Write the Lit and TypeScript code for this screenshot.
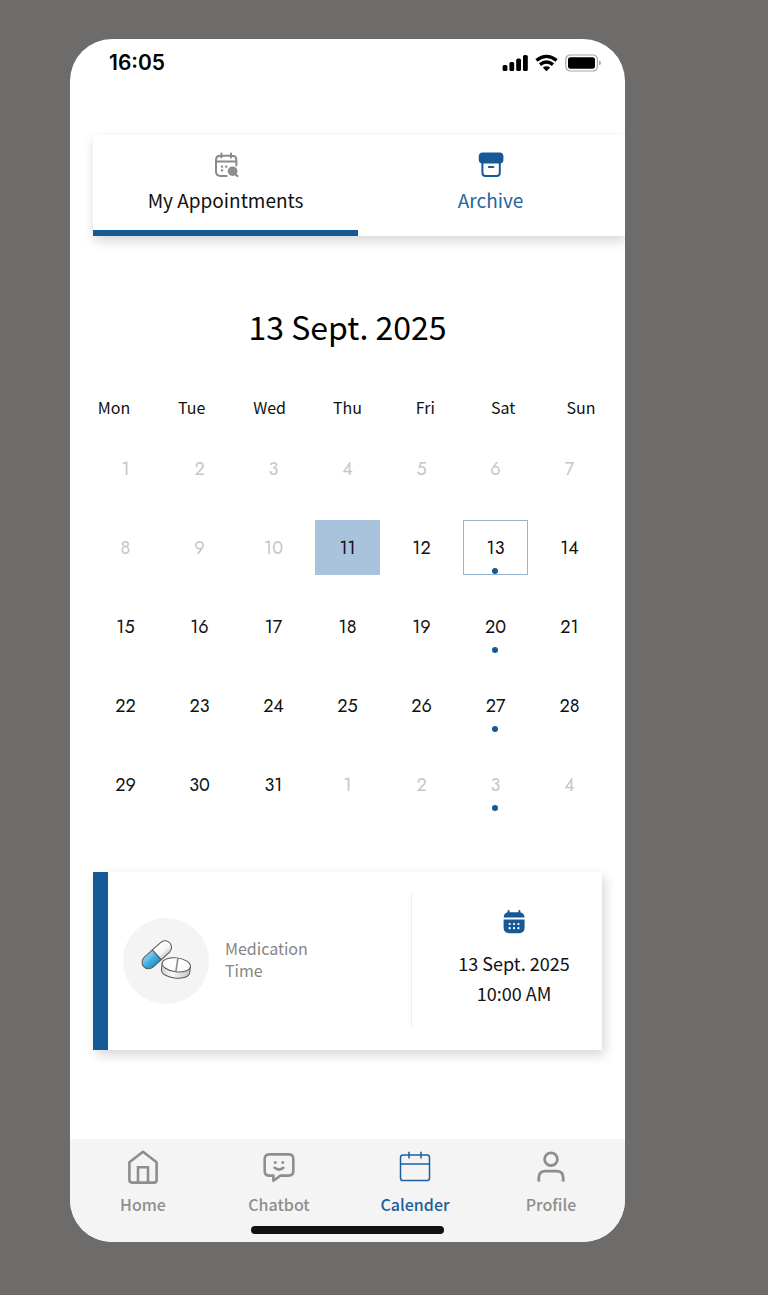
import { LitElement, html, css, svg, nothing } from "lit";
import { customElement, state } from "lit/decorators.js";
import { classMap } from "lit/directives/class-map.js";

interface Day {
  label: number;
  muted?: boolean;
  today?: boolean;
  event?: boolean;
}

const WEEKDAYS = ["Mon", "Tue", "Wed", "Thu", "Fri", "Sat", "Sun"];

const EVENT_INDEXES = [12, 19, 26, 33];

const DAYS: Day[] = Array.from({ length: 35 }, (_, i) => ({
  label: i < 31 ? i + 1 : i - 30,
  muted: i < 10 || i > 30,
  today: i === 10,
  event: EVENT_INDEXES.includes(i),
}));

const iconHome = svg`<svg viewBox="0 0 32 36" width="32" height="36" fill="none" stroke="currentColor" stroke-width="2.6" stroke-linejoin="round" stroke-linecap="round">
  <path d="M2.4 13.2 L16 2.8 L29.6 13.2 V31 Q29.6 33.6 27 33.6 H5 Q2.4 33.6 2.4 31 Z"/>
  <path d="M11 33 V18.2 H21 V33" stroke-linejoin="miter"/>
</svg>`;

const iconChat = svg`<svg viewBox="0 0 32 36" width="32" height="36" fill="none" stroke="currentColor" stroke-width="2.6" stroke-linejoin="round" stroke-linecap="round">
  <path d="M6.4 5.4 H25.6 Q30.3 5.4 30.3 10 V22 Q30.3 26.6 25.6 26.6 H17.4 L10.4 31.8 V26.6 H6.4 Q1.7 26.6 1.7 22 V10 Q1.7 5.4 6.4 5.4 Z"/>
  <path d="M11.6 18.8 Q16 22.4 20.4 18.8"/>
  <path d="M12.2 13.4 V13.6 M19.8 13.4 V13.6" stroke-width="3"/>
</svg>`;

const iconCalendar = svg`<svg viewBox="0 0 32 36" width="32" height="36" fill="none" stroke="currentColor" stroke-width="1.5">
  <rect x="1.5" y="6" width="29" height="25.6" rx="2.6"/>
  <path d="M1.5 15 H30.5 M10 2.8 V9.6 M22 2.8 V9.6"/>
</svg>`;

const iconProfile = svg`<svg viewBox="0 0 32 36" width="32" height="36" fill="none" stroke="currentColor" stroke-width="2.8">
  <circle cx="16" cy="10.2" r="6.4"/>
  <path d="M3.8 32.4 V29 Q3.8 22.2 10.6 22.2 H21.4 Q28.2 22.2 28.2 29 V32.4"/>
</svg>`;

const NAV = [
  { label: "Home", icon: iconHome },
  { label: "Chatbot", icon: iconChat },
  { label: "Calender", icon: iconCalendar, active: true },
  { label: "Profile", icon: iconProfile },
];

@customElement("app-root")
export class AppRoot extends LitElement {
  static styles = css`
    :host {
      display: block;
      box-sizing: border-box;
      min-height: 100vh;
      padding: 39px 143px 53px 70px;
      background: #6d6c6a;
      color: #111;
      font-family: "Noto Sans CJK SC", "Noto Sans", sans-serif;
    }
    *,
    *::before,
    *::after {
      box-sizing: border-box;
    }
    button {
      margin: 0;
      padding: 0;
      border: 0;
      background: none;
      color: inherit;
      font: inherit;
      cursor: pointer;
    }
    svg {
      display: block;
    }
    .phone {
      display: flex;
      flex-direction: column;
      overflow: hidden;
      border-radius: 42px;
      background: #fff;
    }
    .status {
      display: flex;
      justify-content: space-between;
      align-items: center;
      height: 48px;
      padding: 0 24px 0 39px;
      color: #000;
    }
    .clock {
      font: 600 21px/24px Inter, sans-serif;
    }
    .status-icons {
      display: flex;
      align-items: center;
      gap: 7px;
    }
    .tabs {
      display: grid;
      grid-template-columns: 1fr 1fr;
      margin: 48px 0 0 23px;
      padding-right: 2px;
      background: #fff;
      box-shadow: 1px 5px 11px rgba(0, 0, 0, 0.16);
    }
    .tab {
      display: flex;
      flex-direction: column;
      align-items: center;
      gap: 8px;
      height: 101px;
      padding-top: 17px;
      border-bottom: 6px solid transparent;
      font-size: 19px;
      line-height: 28px;
    }
    .tab svg {
      color: #8a8a8a;
    }
    .tab.selected {
      border-color: #155a97;
    }
    .tab.link {
      color: #2566a1;
    }
    .title {
      margin: 66px 0 0;
      color: #000;
      font-size: 32px;
      font-weight: 400;
      line-height: 48px;
      text-align: center;
    }
    .weekdays {
      display: grid;
      grid-template-columns: repeat(7, 1fr);
      margin: 45px 5px 0;
      font-size: 16px;
      line-height: 24px;
      text-align: center;
    }
    .days {
      display: grid;
      grid-template-columns: repeat(7, 1fr);
      gap: 24px 9px;
      margin: 22px 23px 0;
      font-family: Jost, Lato, sans-serif;
      font-size: 18px;
      line-height: 24px;
    }
    .day {
      position: relative;
      height: 55px;
      border: 1px solid transparent;
    }
    .day.muted {
      color: #c6c6c6;
    }
    .day.today {
      background: #a9c3dc;
    }
    .day.chosen {
      border-color: #94b4d4;
    }
    .dot {
      position: absolute;
      bottom: 0;
      left: 50%;
      width: 6px;
      height: 6px;
      margin-left: -4px;
      border-radius: 50%;
      background: #155a97;
    }
    .card {
      display: grid;
      grid-template-columns: 1fr 191px;
      align-items: center;
      min-height: 178px;
      margin: 60px 23px 0;
      border-left: 15px solid #155a97;
      background: #fff;
      box-shadow: 3px 5px 11px rgba(0, 0, 0, 0.16);
    }
    .what {
      display: flex;
      align-items: center;
      gap: 16px;
      padding-left: 15px;
      color: #858585;
      font-size: 16px;
      line-height: 22px;
    }
    .badge {
      display: grid;
      place-items: center;
      flex: none;
      width: 86px;
      height: 86px;
      border-radius: 50%;
      background: #f4f4f4;
    }
    .kind {
      width: 100px;
      margin: 0;
      padding-bottom: 4px;
    }
    .when {
      display: flex;
      flex-direction: column;
      align-items: center;
      height: 134px;
      padding: 15px 0 0 14px;
      border-left: 1px solid #eee;
      font-size: 18px;
      line-height: 30px;
    }
    .when svg {
      margin-bottom: 13px;
      color: #155a97;
    }
    .bottom {
      margin-top: 89px;
      padding: 0 6px 8px 5px;
      background: #f4f4f4;
    }
    .nav {
      display: grid;
      grid-template-columns: repeat(4, 1fr);
      padding-top: 10px;
    }
    .item {
      display: flex;
      flex-direction: column;
      align-items: center;
      gap: 7px;
      color: #8e8e8e;
      font-size: 16px;
      font-weight: 500;
      line-height: 24px;
      text-decoration: none;
    }
    .item.active {
      color: #1c5f9f;
    }
    .handle {
      width: 193px;
      height: 8px;
      margin: 10px auto 0;
      border-radius: 4px;
      background: #111;
    }
  `;

  @state() private chosen = 12;

  private renderDay(day: Day, index: number) {
    const classes = {
      day: true,
      muted: !!day.muted,
      today: !!day.today,
      chosen: index === this.chosen,
    };
    return html`<button
      type="button"
      class=${classMap(classes)}
      @click=${() => (this.chosen = index)}
    >${day.label}${day.event ? html`<span class="dot"></span>` : nothing}</button>`;
  }

  render() {
    return html`
      <div class="phone">
        <header class="status">
          <span class="clock">16:05</span>
          <span class="status-icons">
            <svg width="26" height="18" viewBox="0 0 26 18" fill="currentColor" aria-hidden="true">
              <rect x="0.6" y="11" width="4.8" height="6" rx="1.6"/>
              <rect x="7.4" y="8" width="4.8" height="9" rx="1.6"/>
              <rect x="14.2" y="4.6" width="4.8" height="12.4" rx="1.6"/>
              <rect x="21" y="1" width="4.8" height="16" rx="1.6"/>
            </svg>
            <svg width="23" height="18" viewBox="0 0 23 18" fill="none" stroke="currentColor" stroke-width="3.3" aria-hidden="true">
              <path d="M1.4 6.4 Q11.5 -1.6 21.6 6.4"/>
              <path d="M5 10.6 Q11.5 5.4 18 10.6"/>
              <path d="M7.8 13.6 Q11.5 10.8 15.2 13.6 L11.5 17.2 Z" fill="currentColor" stroke="none"/>
            </svg>
            <svg width="36" height="18" viewBox="0 0 36 18" aria-hidden="true">
              <rect x="0.8" y="1" width="31.6" height="16" rx="4.4" fill="none" stroke="#a6a6a6" stroke-width="1.2"/>
              <rect x="3" y="3.2" width="27" height="11.6" rx="2.4"/>
              <path d="M34 6.4 Q36 7.2 36 9 Q36 10.8 34 11.6 Z" fill="#a6a6a6"/>
            </svg>
          </span>
        </header>

        <div class="tabs" role="tablist">
          <button type="button" class="tab selected" role="tab" aria-selected="true">
            <svg width="26" height="26" viewBox="0 0 26 26" fill="none" stroke="currentColor" stroke-width="2" stroke-linecap="round" aria-hidden="true">
              <path d="M13.6 24 H7.4 Q3 24 3 19.6 V8.2 Q3 3.8 7.4 3.8 H19 Q23.4 3.8 23.4 8.2 V13.6 M3 9.4 H23.4 M8.4 1.4 V5.4 M18 1.4 V5.4"/>
              <path d="M9 14.6 H9.1 M13.2 14.6 H13.3 M9 18.4 H9.1" stroke-width="2.4"/>
              <circle cx="19.6" cy="19.2" r="4.8" fill="currentColor" stroke="none"/>
              <path d="M22.4 22.2 L24.4 24" stroke-width="2.2"/>
              <circle cx="19.6" cy="19.2" r="2.4" stroke="#9c9c9c" stroke-width="0.7"/>
            </svg>
            <span>My Appointments</span>
          </button>
          <button type="button" class="tab link" role="tab" aria-selected="false">
            <svg width="26" height="26" viewBox="0 0 26 26" fill="none" stroke="#155a97" aria-hidden="true">
              <path d="M4.4 11 V20.8 Q4.4 24 7.6 24 H18.6 Q21.8 24 21.8 20.8 V11" stroke-width="2"/>
              <rect x="0.8" y="0.4" width="24.6" height="11.2" rx="3.8" fill="#155a97" stroke="none"/>
              <path d="M10.8 15 H15.4" stroke-width="2" stroke-linecap="round"/>
            </svg>
            <span>Archive</span>
          </button>
        </div>

        <h1 class="title">13 Sept. 2025</h1>

        <div class="weekdays">${WEEKDAYS.map((name) => html`<span>${name}</span>`)}</div>
        <div class="days">${DAYS.map((day, i) => this.renderDay(day, i))}</div>

        <section class="card">
          <div class="what">
            <span class="badge">
              <svg width="52" height="42" viewBox="0 0 52 42" aria-hidden="true">
                <defs>
                  <linearGradient id="blue" x1="0" y1="0" x2="0" y2="1">
                    <stop offset="0" stop-color="#8ad6f3"/>
                    <stop offset="0.5" stop-color="#47afdd"/>
                    <stop offset="1" stop-color="#2590c6"/>
                  </linearGradient>
                  <linearGradient id="shell" x1="0" y1="0" x2="0" y2="1">
                    <stop offset="0" stop-color="#ffffff"/>
                    <stop offset="0.6" stop-color="#f6f6f6"/>
                    <stop offset="1" stop-color="#cfcfcf"/>
                  </linearGradient>
                  <linearGradient id="side" x1="0" y1="0" x2="1" y2="0">
                    <stop offset="0" stop-color="#d2d2d6"/>
                    <stop offset="0.4" stop-color="#fafafa"/>
                    <stop offset="1" stop-color="#c4c4c8"/>
                  </linearGradient>
                </defs>
                <g transform="translate(16.8 14.8) rotate(-42)" stroke="#55585c" stroke-width="1">
                  <path d="M0 -6.6 H-11 A6.6 6.6 0 0 0 -11 6.6 H0 Z" fill="url(#blue)"/>
                  <path d="M0 -6.6 H11 A6.6 6.6 0 0 1 11 6.6 H0 Z" fill="url(#shell)"/>
                </g>
                <g transform="translate(36 27.4) rotate(7)" stroke="#55585c" stroke-width="1">
                  <path d="M-14.2 -3 V4 C-13 13 13 13 14.2 4 V-3 Z" fill="url(#side)"/>
                  <ellipse cx="0" cy="-2.6" rx="14.2" ry="7" fill="#fdfdfd"/>
                  <path d="M0.8 -9.4 L0.4 4.2" stroke="#8b8b90" stroke-width="1.6"/>
                </g>
              </svg>
            </span>
            <p class="kind">Medication Time</p>
          </div>
          <div class="when">
            <svg width="22" height="26" viewBox="0 0 22 26" fill="currentColor" aria-hidden="true">
              <path d="M4.6 2 Q4.6 1 5.6 1 Q6.6 1 6.6 2 V3.2 H15.4 V2 Q15.4 1 16.4 1 Q17.4 1 17.4 2 V3.2 Q21.4 4.2 21.6 8.6 H0.6 Q0.8 4.2 4.6 3.2 Z"/>
              <path d="M0.6 10.4 H21.6 V18.6 Q21.6 24.2 16 24.2 H6.2 Q0.6 24.2 0.6 18.6 Z"/>
              <path d="M6.6 15 H6.7 M11 15 H11.1 M15.4 15 H15.5 M6.6 19.2 H6.7 M11 19.2 H11.1 M15.4 19.2 H15.5" stroke="#fff" stroke-width="2.2" stroke-linecap="round"/>
            </svg>
            <span>13 Sept. 2025</span>
            <span>10:00 AM</span>
          </div>
        </section>

        <footer class="bottom">
          <nav class="nav">
            ${NAV.map(
              (item) => html`<a href="#" class=${classMap({ item: true, active: !!item.active })}>
                ${item.icon}<span>${item.label}</span>
              </a>`
            )}
          </nav>
          <div class="handle"></div>
        </footer>
      </div>
    `;
  }
}
